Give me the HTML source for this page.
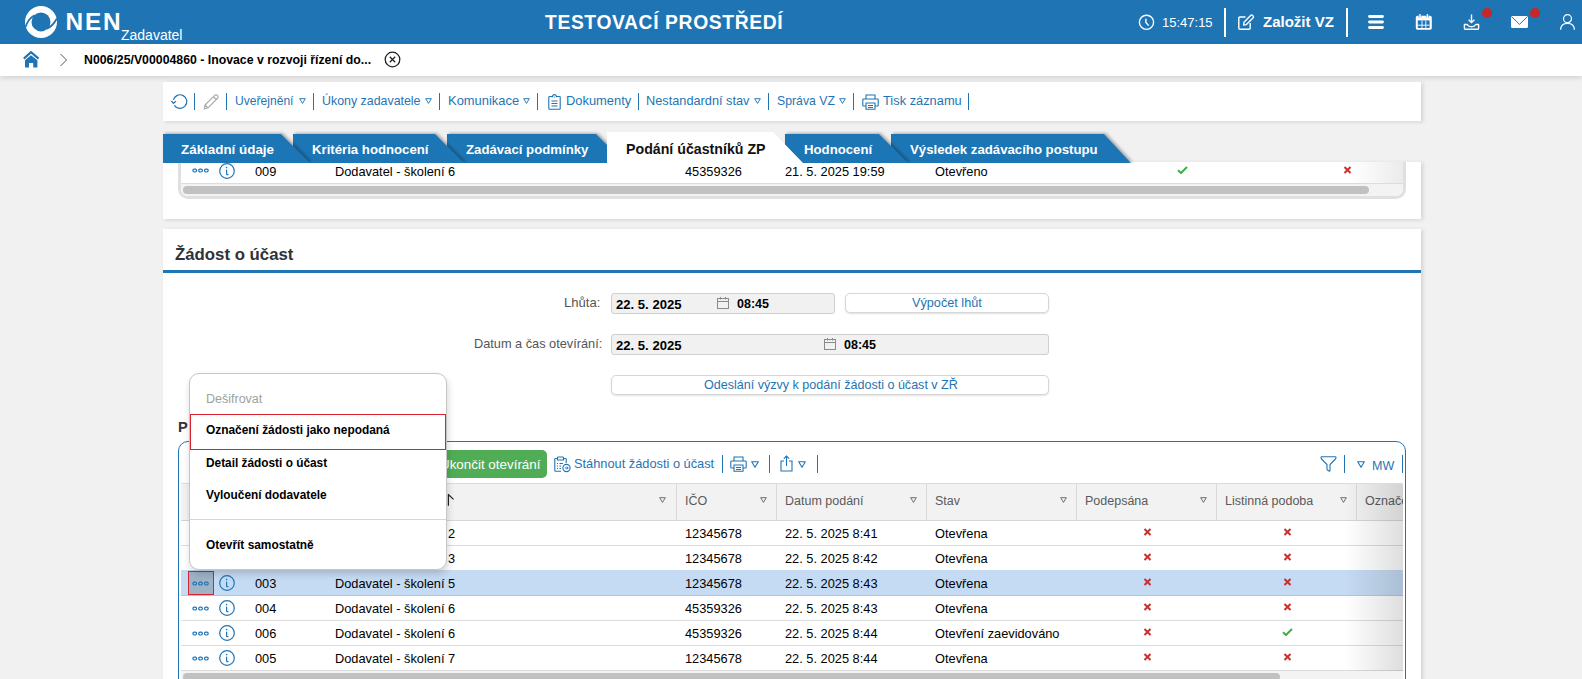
<!DOCTYPE html>
<html><head><meta charset="utf-8">
<style>
*{box-sizing:border-box;margin:0;padding:0}
html,body{width:1582px;height:679px;overflow:hidden;background:#f1f1f1;font-family:"Liberation Sans",sans-serif;color:#000;position:relative}
.abs{position:absolute}
svg{position:absolute;overflow:visible}
#hdr{left:0;top:0;width:1582px;height:44px;background:#1f74b4;color:#fff}
#bc{left:0;top:44px;width:1582px;height:32px;background:#fff;box-shadow:0 2px 5px rgba(0,0,0,.13)}
.t{position:absolute;white-space:nowrap;line-height:1}
.lnk{color:#1f74b4;font-size:12.5px}
.sep{position:absolute;width:1.3px;background:#1f74b4}
.panel{position:absolute;background:#fff;box-shadow:1.5px 1px 4px rgba(0,0,0,.13)}
.tabt{position:absolute;white-space:nowrap;line-height:1;color:#fff;font-weight:bold;font-size:13.2px}
.row{position:absolute;left:0;height:25px;width:1224px;border-bottom:1px solid #dcdcdc}
.c{position:absolute;white-space:nowrap;line-height:1;font-size:12.8px;top:7px}
.hd{position:absolute;white-space:nowrap;line-height:1;font-size:12.5px;color:#5a5a5a;top:12px}
.csep{position:absolute;top:0;width:1px;height:36px;background:#d8d8d8}
.tri{position:absolute}
.inp{position:absolute;background:#f1f1f1;border:1px solid #cfcfcf;border-radius:3px}
.btn{position:absolute;background:#fff;border:1px solid #d6d6d6;border-radius:5px;box-shadow:0 1px 2px rgba(0,0,0,.12)}
.mi{position:absolute;white-space:nowrap;line-height:1;font-size:12.5px;font-weight:bold;left:16px}
</style></head><body>
<svg width="0" height="0" style="position:absolute">
 <defs>
  <symbol id="tri" viewBox="0 0 8 7"><path d="M0.7 0.8 L7.3 0.8 L4 6.3 Z" fill="none" stroke="currentColor" stroke-width="1.1" stroke-linejoin="round"/></symbol>
  <symbol id="dots" viewBox="0 0 17 5"><rect x="0.9" y="1.1" width="3.7" height="2.9" rx="1.4" fill="none" stroke="currentColor" stroke-width="1.2"/><rect x="6.7" y="1.1" width="3.7" height="2.9" rx="1.4" fill="none" stroke="currentColor" stroke-width="1.2"/><rect x="12.5" y="1.1" width="3.7" height="2.9" rx="1.4" fill="none" stroke="currentColor" stroke-width="1.2"/></symbol>
  <symbol id="info" viewBox="0 0 16 16"><circle cx="8" cy="8" r="7.3" fill="none" stroke="currentColor" stroke-width="1.2"/><circle cx="7.6" cy="4.6" r="0.8" fill="currentColor"/><path d="M7.6 7 L7.6 11 Q7.8 12 9 11.6" fill="none" stroke="currentColor" stroke-width="1.2" stroke-linecap="round"/></symbol>
  <symbol id="x" viewBox="0 0 8 8"><path d="M1 1 L7 7 M7 1 L1 7" stroke="#c9302c" stroke-width="2" stroke-linecap="butt"/></symbol>
  <symbol id="ok" viewBox="0 0 11 8"><path d="M1 4.2 L4 7 L10 1" fill="none" stroke="#3cb043" stroke-width="2"/></symbol>
  <symbol id="cal" viewBox="0 0 12 12"><rect x="0.5" y="1.5" width="11" height="10" fill="none" stroke="#8a8a8a" stroke-width="1"/><path d="M0.5 4.5 H11.5 M3.5 0 V2.5 M8.5 0 V2.5" stroke="#8a8a8a" stroke-width="1"/></symbol>
 </defs>
</svg>

<!-- HEADER -->
<div id="hdr" class="abs">
  <svg style="left:25px;top:6px" width="32" height="32" viewBox="0 0 32 32">
    <circle cx="16" cy="16" r="16" fill="#fff"/>
    <circle cx="16" cy="15.9" r="9.5" fill="#1f74b4"/>
    <path d="M9.5 9.2 Q3 13 0.6 21" fill="none" stroke="#1f74b4" stroke-width="1.7"/>
    <path d="M21.5 23 Q28 20 31.8 12.5" fill="none" stroke="#1f74b4" stroke-width="1.7"/>
  </svg>
  <div class="t" style="left:65.5px;top:9.5px;font-size:24.4px;font-weight:bold;letter-spacing:1.8px">NEN</div>
  <div class="t" style="left:121px;top:28px;font-size:14px">Zadavatel</div>
  <div class="t" style="left:545px;top:13px;font-size:19.3px;font-weight:bold;letter-spacing:0.62px">TESTOVACÍ PROSTŘEDÍ</div>
  <svg style="left:1138px;top:14px" width="17" height="17" viewBox="0 0 17 17"><circle cx="8.5" cy="8.3" r="7.1" fill="none" stroke="#fff" stroke-width="1.4"/><path d="M7.9 4.7 V8.4 L10.7 11.6" fill="none" stroke="#fff" stroke-width="1.4"/></svg>
  <div class="t" style="left:1162px;top:16px;font-size:13px">15:47:15</div>
  <div class="abs" style="left:1224px;top:8px;width:2px;height:29px;background:#fff"></div>
  <svg style="left:1238px;top:14px" width="17" height="16" viewBox="0 0 17 16"><path d="M7.5 3 H2 Q0.8 3 0.8 4.2 V14 Q0.8 15.2 2 15.2 H11 Q12.2 15.2 12.2 14 V9" fill="none" stroke="#fff" stroke-width="1.4"/><path d="M5.6 11 L6 8.2 L12.6 1.6 Q13.6 0.6 14.6 1.6 L15 2 Q16 3 15 4 L8.4 10.6 Z" fill="none" stroke="#fff" stroke-width="1.4" stroke-linejoin="round"/></svg>
  <div class="t" style="left:1263px;top:14px;font-size:15px;font-weight:bold">Založit VZ</div>
  <div class="abs" style="left:1346px;top:8px;width:2px;height:29px;background:#fff"></div>
  <svg style="left:1368px;top:14px" width="16" height="16" viewBox="0 0 16 16"><path d="M1.5 2.5 H14.5 M1.5 8 H14.5 M1.5 13.5 H14.5" stroke="#fff" stroke-width="2.8" stroke-linecap="round"/></svg>
  <svg style="left:1415px;top:14px" width="17" height="16" viewBox="0 0 17 16"><rect x="0.8" y="1.8" width="16" height="13.9" rx="1.6" fill="#fff"/><rect x="2.8" y="6.4" width="11.8" height="7.6" fill="#1f74b4"/><path d="M7 6.4 V14 M10.8 6.4 V14 M2.8 11.2 H14.6" stroke="#fff" stroke-width="0.9"/><path d="M5 0 V3.6 M12.4 0 V3.6" stroke="#fff" stroke-width="1.3"/><path d="M3.9 1.8 V3.8 M6.1 1.8 V3.8 M11.3 1.8 V3.8 M13.5 1.8 V3.8" stroke="#1f74b4" stroke-width="0.7" opacity="0.6"/></svg>
  <svg style="left:1463px;top:14px" width="17" height="16" viewBox="0 0 17 16"><path d="M8.5 0.5 V8.5 M5.6 5.8 L8.5 8.6 L11.4 5.8" fill="none" stroke="#fff" stroke-width="1.4"/><path d="M1.4 10.5 V14.3 Q1.4 15.2 2.3 15.2 H14.7 Q15.6 15.2 15.6 14.3 V10.5 H12.8 Q11.5 12.8 8.5 12.8 Q5.5 12.8 4.2 10.5 Z" fill="none" stroke="#fff" stroke-width="1.4" stroke-linejoin="round"/></svg>
  <div class="abs" style="left:1482px;top:8px;width:10px;height:10px;border-radius:50%;background:#c62828"></div>
  <svg style="left:1511px;top:16px" width="17" height="12" viewBox="0 0 17 12"><rect x="0" y="0" width="17" height="12" rx="1.5" fill="#fff"/><path d="M0.8 0.8 L8.5 8.3 L16.2 0.8" fill="none" stroke="#1f74b4" stroke-width="1"/></svg>
  <div class="abs" style="left:1530px;top:8px;width:10px;height:10px;border-radius:50%;background:#c62828"></div>
  <svg style="left:1559px;top:14px" width="17" height="16" viewBox="0 0 17 16"><circle cx="8.5" cy="4.7" r="4" fill="none" stroke="#fff" stroke-width="1.2"/><path d="M1.6 15.8 Q1.8 9.3 8.5 9.3 Q15.2 9.3 15.4 15.8" fill="none" stroke="#fff" stroke-width="1.2"/></svg>
</div>

<!-- BREADCRUMB -->
<div id="bc" class="abs">
  <svg style="left:23px;top:7px" width="17" height="17" viewBox="0 0 17 17"><path d="M0.8 7.6 L8 1.2 L15.6 7.6" fill="none" stroke="#1f74b4" stroke-width="2.1" stroke-linejoin="miter"/><path d="M2 9.2 L8 4.2 L14.4 9.2 V16.6 H10.2 V12 H6 V16.6 H2 Z" fill="#1f74b4"/></svg>
  <svg style="left:59px;top:9px" width="9" height="14" viewBox="0 0 9 14"><path d="M1.5 1 L7.5 7 L1.5 13" fill="none" stroke="#555" stroke-width="1"/></svg>
  <div class="t" style="left:84px;top:10px;font-size:12.3px;font-weight:bold">N006/25/V00004860 - Inovace v rozvoji řízení do...</div>
  <svg style="left:384px;top:7px" width="17" height="17" viewBox="0 0 17 17"><circle cx="8.5" cy="8.5" r="7.3" fill="none" stroke="#222" stroke-width="1.3"/><path d="M5.8 5.8 L11.2 11.2 M11.2 5.8 L5.8 11.2" stroke="#222" stroke-width="1.3"/></svg>
</div>

<!-- TOOLBAR -->
<div class="panel" style="left:163px;top:82px;width:1258px;height:39px">
</div>
<div id="tb">
  <svg style="left:171px;top:94px" width="17" height="16" viewBox="0 0 17 16"><path d="M2.4 5.9 A6.8 6.8 0 1 1 3.3 11.3" fill="none" stroke="#1f74b4" stroke-width="1.2"/><path d="M0.5 6.8 L2.4 9.4 L4.9 7.2" fill="none" stroke="#1f74b4" stroke-width="1.3"/></svg>
  <div class="sep" style="left:194px;top:93px;height:17px"></div>
  <svg style="left:203px;top:94px" width="16" height="16" viewBox="0 0 16 16"><path d="M1.2 15 L2 11 L12 1.2 Q13 0.5 14 1.2 L14.8 2 Q15.5 3 14.8 4 L5 13.8 Z M10.5 2.8 L13.2 5.5 M2 11 L5 14" fill="none" stroke="#a8a8a8" stroke-width="1.1" stroke-linejoin="round"/></svg>
  <div class="sep" style="left:226px;top:93px;height:17px"></div>
  <div class="t lnk" style="left:235px;top:95px;font-size:12.1px">Uveřejnění</div>
  <svg style="left:299px;top:98px;color:#1f74b4" width="7" height="6"><use href="#tri"/></svg>
  <div class="sep" style="left:313px;top:93px;height:17px"></div>
  <div class="t lnk" style="left:322px;top:95px;font-size:12.4px">Úkony zadavatele</div>
  <svg style="left:425px;top:98px;color:#1f74b4" width="7" height="6"><use href="#tri"/></svg>
  <div class="sep" style="left:439px;top:93px;height:17px"></div>
  <div class="t lnk" style="left:448px;top:95px;font-size:12.95px">Komunikace</div>
  <svg style="left:523px;top:98px;color:#1f74b4" width="7" height="6"><use href="#tri"/></svg>
  <div class="sep" style="left:537px;top:93px;height:17px"></div>
  <svg style="left:548px;top:94px" width="13" height="16" viewBox="0 0 13 16"><path d="M4 2.5 H1.5 Q0.8 2.5 0.8 3.2 V14.5 Q0.8 15.2 1.5 15.2 H11.5 Q12.2 15.2 12.2 14.5 V3.2 Q12.2 2.5 11.5 2.5 H9" fill="none" stroke="#1f74b4" stroke-width="1.1"/><path d="M3.5 2.6 H4.6 A1.9 1.9 0 0 1 8.4 2.6 H9.5" fill="none" stroke="#1f74b4" stroke-width="1.2"/><circle cx="6.5" cy="2.9" r="0.5" fill="#1f74b4"/><path d="M3.5 7 H9.5 M3.5 9.5 H9.5 M3.5 12 H9.5" stroke="#1f74b4" stroke-width="1.1"/></svg>
  <div class="t lnk" style="left:566px;top:95px;font-size:12.9px">Dokumenty</div>
  <div class="sep" style="left:638px;top:93px;height:17px"></div>
  <div class="t lnk" style="left:646px;top:95px;font-size:12.75px">Nestandardní stav</div>
  <svg style="left:754px;top:98px;color:#1f74b4" width="7" height="6"><use href="#tri"/></svg>
  <div class="sep" style="left:768px;top:93px;height:17px"></div>
  <div class="t lnk" style="left:777px;top:95px;font-size:12.25px">Správa VZ</div>
  <svg style="left:839px;top:98px;color:#1f74b4" width="7" height="6"><use href="#tri"/></svg>
  <div class="sep" style="left:853px;top:93px;height:17px"></div>
  <svg style="left:862px;top:94px" width="17" height="16" viewBox="0 0 17 16"><path d="M4 5 V1 H13 V5" fill="none" stroke="#1f74b4" stroke-width="1.1"/><path d="M4 12 H1.5 Q0.8 12 0.8 11.2 V5.8 Q0.8 5 1.5 5 H15.5 Q16.2 5 16.2 5.8 V11.2 Q16.2 12 15.5 12 H13" fill="none" stroke="#1f74b4" stroke-width="1.1"/><path d="M4 9 H13 V15.2 H4 Z M6 11.5 H11 M6 13.5 H11" fill="none" stroke="#1f74b4" stroke-width="1.1"/></svg>
  <div class="t lnk" style="left:883px;top:95px;font-size:12.85px">Tisk záznamu</div>
  <div class="sep" style="left:968px;top:93px;height:17px"></div>
</div>

<!-- TABS -->
<div id="tabs" style="position:absolute;left:0;top:0;z-index:5"><svg style="left:0;top:0;overflow:hidden" width="1582" height="163" viewBox="0 0 1582 163"><defs><filter id="tsh" x="-10%" y="-50%" width="120%" height="200%"><feDropShadow dx="1.8" dy="-0.8" stdDeviation="1.4" flood-color="#000" flood-opacity="0.32"/></filter></defs><polygon points="891,163 891,134 1104,134 1130,162 1131,163" fill="#1f74b4" filter="url(#tsh)"/><polygon points="785,163 785,134 879,134 907,162 908,163" fill="#1f74b4" filter="url(#tsh)"/><polygon points="447,163 447,134 596,134 624,162 625,163" fill="#1f74b4" filter="url(#tsh)"/><polygon points="293,163 293,134 435,134 463,162 464,163" fill="#1f74b4" filter="url(#tsh)"/><polygon points="163,163 163,134 281,134 309,162 310,163" fill="#1f74b4" filter="url(#tsh)"/><polygon points="607,163 607,132 773,132 803,163 803,163" fill="#fff"/></svg><div class="tabt" style="left:181px;top:143px;font-size:13.4px">Základní údaje</div><div class="tabt" style="left:312px;top:143px">Kritéria hodnocení</div><div class="tabt" style="left:466px;top:143px">Zadávací podmínky</div><div class="tabt" style="left:804px;top:143px">Hodnocení</div><div class="tabt" style="left:910px;top:143px">Výsledek zadávacího postupu</div><div class="t" style="left:626px;top:142px;font-size:14.2px;font-weight:bold;color:#111">Podání účastníků ZP</div></div>

<!-- TOP TABLE PANEL -->
<div class="panel" style="left:163px;top:162px;width:1258px;height:57px"></div>
<div class="abs" style="left:178px;top:162px;width:1228px;height:37px;border:3px solid #dfe0e2;border-top:none;border-radius:0 0 10px 10px;overflow:hidden;background:#fff">
  <div class="abs" style="left:0;top:0;width:1222px;height:22px;border-bottom:1px solid #dcdcdc"></div>
  <div class="abs" style="left:1170px;top:0;width:52px;height:21px;background:linear-gradient(90deg,rgba(235,235,235,0),#ebebeb)"></div>
  <div class="abs" style="left:0;top:22px;width:1222px;height:12px;background:#f3f3f3"></div>
  <div class="abs" style="left:2px;top:24px;width:1186px;height:8px;border-radius:4px;background:#c1c1c1"></div>
</div>
<svg style="left:192px;top:168px;color:#1f74b4" width="17" height="5"><use href="#dots"/></svg>
<svg style="left:219px;top:163px;color:#1f74b4" width="16" height="16"><use href="#info"/></svg>
<div class="c" style="left:255px;top:166px">009</div>
<div class="c" style="left:335px;top:166px">Dodavatel - školení 6</div>
<div class="c" style="left:685px;top:166px">45359326</div>
<div class="c" style="left:785px;top:166px">21. 5. 2025 19:59</div>
<div class="c" style="left:935px;top:166px">Otevřeno</div>
<svg style="left:1177px;top:166px" width="11" height="8"><use href="#ok"/></svg>
<svg style="left:1343px;top:166px" width="9" height="8"><use href="#x"/></svg>

<!-- SECTION -->
<div class="panel" style="left:163px;top:229px;width:1258px;height:460px"></div>
<div class="t" style="left:175px;top:246.5px;font-size:16.8px;font-weight:bold;color:#2e3338">Žádost o účast</div>
<div class="abs" style="left:163px;top:270px;width:1258px;height:3px;background:#1f74b4"></div>
<!-- FORM -->
<div class="t" style="left:564px;top:296px;font-size:13.1px;color:#555">Lhůta:</div>
<div class="inp" style="left:611px;top:293px;width:224px;height:21px"></div>
<div class="t" style="left:616px;top:298px;font-size:13.1px;font-weight:bold">22. 5. 2025</div>
<svg style="left:717px;top:297px" width="12" height="12"><use href="#cal"/></svg>
<div class="t" style="left:737px;top:298px;font-size:12.5px;font-weight:bold">08:45</div>
<div class="btn" style="left:845px;top:293px;width:204px;height:20px"></div>
<div class="t lnk" style="left:912px;top:297px;font-size:12.7px">Výpočet lhůt</div>
<div class="t" style="left:474px;top:338px;font-size:12.75px;color:#555">Datum a čas otevírání:</div>
<div class="inp" style="left:611px;top:334px;width:438px;height:21px"></div>
<div class="t" style="left:616px;top:339px;font-size:13.1px;font-weight:bold">22. 5. 2025</div>
<svg style="left:824px;top:338px" width="12" height="12"><use href="#cal"/></svg>
<div class="t" style="left:844px;top:339px;font-size:12.5px;font-weight:bold">08:45</div>
<div class="btn" style="left:611px;top:375px;width:438px;height:20px"></div>
<div class="t lnk" style="left:704px;top:379px;font-size:12.55px">Odeslání výzvy k podání žádosti o účast v ZŘ</div>
<div class="t" style="left:178px;top:420px;font-size:14.6px;font-weight:bold;color:#2e3338">P</div>

<!-- GRID -->
<div class="abs" style="left:178px;top:441px;width:1228px;height:260px;border:1.5px solid #1f74b4;border-radius:10px 10px 0 0;background:#fff;overflow:hidden">
 <div class="abs" style="left:1.5px;top:41px;width:1222px;height:38px;background:#f2f2f2;border-top:1px solid #dcdcdc;border-bottom:1px solid #d6d6d6"></div>
 <div class="abs" style="left:497px;top:42px;width:1px;height:36px;background:#d9d9d9"></div>
 <div class="abs" style="left:597px;top:42px;width:1px;height:36px;background:#d9d9d9"></div>
 <div class="abs" style="left:747px;top:42px;width:1px;height:36px;background:#d9d9d9"></div>
 <div class="abs" style="left:897px;top:42px;width:1px;height:36px;background:#d9d9d9"></div>
 <div class="abs" style="left:1037px;top:42px;width:1px;height:36px;background:#d9d9d9"></div>
 <div class="abs" style="left:1177px;top:42px;width:1px;height:36px;background:#d9d9d9"></div>
</div>
<svg style="left:447px;top:493px" width="8" height="13" viewBox="0 0 8 13"><path d="M1.4 12.8 V1.4 M1 1.2 L6.6 6.4" fill="none" stroke="#222" stroke-width="1.2"/></svg>
<svg style="left:659px;top:497px;color:#666" width="7" height="6"><use href="#tri"/></svg>
<div class="hd" style="left:685px;top:495px">IČO</div>
<svg style="left:760px;top:497px;color:#666" width="7" height="6"><use href="#tri"/></svg>
<div class="hd" style="left:785px;top:495px">Datum podání</div>
<svg style="left:910px;top:497px;color:#666" width="7" height="6"><use href="#tri"/></svg>
<div class="hd" style="left:935px;top:495px">Stav</div>
<svg style="left:1060px;top:497px;color:#666" width="7" height="6"><use href="#tri"/></svg>
<div class="hd" style="left:1085px;top:495px">Podepsána</div>
<svg style="left:1200px;top:497px;color:#666" width="7" height="6"><use href="#tri"/></svg>
<div class="hd" style="left:1225px;top:495px">Listinná podoba</div>
<svg style="left:1340px;top:497px;color:#666" width="7" height="6"><use href="#tri"/></svg>
<div class="abs" style="left:1357px;top:484px;width:46px;height:36px;overflow:hidden"><div class="hd" style="left:8px;top:11px">Označení</div></div>
<div class="abs" style="left:181px;top:521px;width:1222px;height:25px;background:#fff;border-bottom:1px solid #dcdcdc"></div>
<svg style="left:192px;top:531px;color:#1f74b4" width="17" height="5"><use href="#dots"/></svg>
<svg style="left:219px;top:525px;color:#1f74b4" width="16" height="16"><use href="#info"/></svg>
<div class="c" style="left:255px;top:528px">001</div>
<div class="c" style="left:335px;top:528px">Dodavatel - školení 2</div>
<div class="c" style="left:685px;top:528px">12345678</div>
<div class="c" style="left:785px;top:528px">22. 5. 2025 8:41</div>
<div class="c" style="left:935px;top:528px">Otevřena</div>
<svg style="left:1143px;top:528px" width="9" height="8"><use href="#x"/></svg>
<svg style="left:1283px;top:528px" width="9" height="8"><use href="#x"/></svg>
<div class="abs" style="left:181px;top:546px;width:1222px;height:25px;background:#fff;border-bottom:1px solid #dcdcdc"></div>
<svg style="left:192px;top:556px;color:#1f74b4" width="17" height="5"><use href="#dots"/></svg>
<svg style="left:219px;top:550px;color:#1f74b4" width="16" height="16"><use href="#info"/></svg>
<div class="c" style="left:255px;top:553px">002</div>
<div class="c" style="left:335px;top:553px">Dodavatel - školení 3</div>
<div class="c" style="left:685px;top:553px">12345678</div>
<div class="c" style="left:785px;top:553px">22. 5. 2025 8:42</div>
<div class="c" style="left:935px;top:553px">Otevřena</div>
<svg style="left:1143px;top:553px" width="9" height="8"><use href="#x"/></svg>
<svg style="left:1283px;top:553px" width="9" height="8"><use href="#x"/></svg>
<div class="abs" style="left:181px;top:570px;width:1222px;height:26px;background:#c5dbf3;border-bottom:1px solid #a9c9ec"></div>
<div class="abs" style="left:188px;top:571px;width:26px;height:24px;border:1.5px solid #d9232e;background:#9fb2c6"></div>
<svg style="left:192px;top:581px;color:#1f74b4" width="17" height="5"><use href="#dots"/></svg>
<svg style="left:219px;top:575px;color:#1f74b4" width="16" height="16"><use href="#info"/></svg>
<div class="c" style="left:255px;top:578px">003</div>
<div class="c" style="left:335px;top:578px">Dodavatel - školení 5</div>
<div class="c" style="left:685px;top:578px">12345678</div>
<div class="c" style="left:785px;top:578px">22. 5. 2025 8:43</div>
<div class="c" style="left:935px;top:578px">Otevřena</div>
<svg style="left:1143px;top:578px" width="9" height="8"><use href="#x"/></svg>
<svg style="left:1283px;top:578px" width="9" height="8"><use href="#x"/></svg>
<div class="abs" style="left:181px;top:596px;width:1222px;height:25px;background:#fff;border-bottom:1px solid #dcdcdc"></div>
<svg style="left:192px;top:606px;color:#1f74b4" width="17" height="5"><use href="#dots"/></svg>
<svg style="left:219px;top:600px;color:#1f74b4" width="16" height="16"><use href="#info"/></svg>
<div class="c" style="left:255px;top:603px">004</div>
<div class="c" style="left:335px;top:603px">Dodavatel - školení 6</div>
<div class="c" style="left:685px;top:603px">45359326</div>
<div class="c" style="left:785px;top:603px">22. 5. 2025 8:43</div>
<div class="c" style="left:935px;top:603px">Otevřena</div>
<svg style="left:1143px;top:603px" width="9" height="8"><use href="#x"/></svg>
<svg style="left:1283px;top:603px" width="9" height="8"><use href="#x"/></svg>
<div class="abs" style="left:181px;top:621px;width:1222px;height:25px;background:#fff;border-bottom:1px solid #dcdcdc"></div>
<svg style="left:192px;top:631px;color:#1f74b4" width="17" height="5"><use href="#dots"/></svg>
<svg style="left:219px;top:625px;color:#1f74b4" width="16" height="16"><use href="#info"/></svg>
<div class="c" style="left:255px;top:628px">006</div>
<div class="c" style="left:335px;top:628px">Dodavatel - školení 6</div>
<div class="c" style="left:685px;top:628px">45359326</div>
<div class="c" style="left:785px;top:628px">22. 5. 2025 8:44</div>
<div class="c" style="left:935px;top:628px">Otevření zaevidováno</div>
<svg style="left:1143px;top:628px" width="9" height="8"><use href="#x"/></svg>
<svg style="left:1282px;top:628px" width="11" height="8"><use href="#ok"/></svg>
<div class="abs" style="left:181px;top:646px;width:1222px;height:25px;background:#fff;border-bottom:1px solid #dcdcdc"></div>
<svg style="left:192px;top:656px;color:#1f74b4" width="17" height="5"><use href="#dots"/></svg>
<svg style="left:219px;top:650px;color:#1f74b4" width="16" height="16"><use href="#info"/></svg>
<div class="c" style="left:255px;top:653px">005</div>
<div class="c" style="left:335px;top:653px">Dodavatel - školení 7</div>
<div class="c" style="left:685px;top:653px">12345678</div>
<div class="c" style="left:785px;top:653px">22. 5. 2025 8:44</div>
<div class="c" style="left:935px;top:653px">Otevřena</div>
<svg style="left:1143px;top:653px" width="9" height="8"><use href="#x"/></svg>
<svg style="left:1283px;top:653px" width="9" height="8"><use href="#x"/></svg>
<div class="abs" style="left:1345px;top:484px;width:58px;height:187px;background:linear-gradient(90deg,rgba(0,0,0,0),rgba(0,0,0,.13))"></div>
<div class="abs" style="left:181px;top:671px;width:1222px;height:8px;background:#f3f3f3"></div>
<div class="abs" style="left:183px;top:673px;width:1097px;height:8px;border-radius:4px;background:#c1c1c1"></div>
<div class="abs" style="left:420px;top:450px;width:127px;height:28px;border-radius:5px;background:#50ad55"></div>
<div class="t" style="left:440px;top:458px;font-size:13.4px;color:#fff">Ukončit otevírání</div>
<svg style="left:554px;top:456px" width="17" height="16" viewBox="0 0 17 16"><path d="M3.5 2.5 H1.5 Q0.8 2.5 0.8 3.2 V14.5 Q0.8 15.2 1.5 15.2 H7" fill="none" stroke="#1f74b4" stroke-width="1.1"/><path d="M9.5 2.5 H11.5 Q12.2 2.5 12.2 3.2 V7" fill="none" stroke="#1f74b4" stroke-width="1.1"/><path d="M3.5 4 V1.8 Q3.5 1 4.3 1 H8.7 Q9.5 1 9.5 1.8 V4 Z" fill="none" stroke="#1f74b4" stroke-width="1.1"/><path d="M3 7.5 H4 M5.5 7.5 H9 M3 10 H4 M5.5 10 H7 M3 12.5 H4 M5.5 12.5 H7" stroke="#1f74b4" stroke-width="1.1"/><circle cx="12.5" cy="12" r="3.6" fill="#fff" stroke="#1f74b4" stroke-width="1.1"/><path d="M10.8 12 H14.2 M12.8 10.6 L14.2 12 L12.8 13.4" fill="none" stroke="#1f74b4" stroke-width="1"/></svg>
<div class="t lnk" style="left:574px;top:458px;font-size:12.8px">Stáhnout žádosti o účast</div>
<div class="sep" style="left:722px;top:455px;height:18px"></div>
<svg style="left:730px;top:456px" width="17" height="16" viewBox="0 0 17 16"><path d="M4 5 V1 H13 V5" fill="none" stroke="#1f74b4" stroke-width="1.1"/><path d="M4 12 H1.5 Q0.8 12 0.8 11.2 V5.8 Q0.8 5 1.5 5 H15.5 Q16.2 5 16.2 5.8 V11.2 Q16.2 12 15.5 12 H13" fill="none" stroke="#1f74b4" stroke-width="1.1"/><path d="M4 9 H13 V15.2 H4 Z M6 11.5 H11 M6 13.5 H11" fill="none" stroke="#1f74b4" stroke-width="1.1"/></svg>
<svg style="left:751px;top:461px;color:#1f74b4" width="8" height="7"><use href="#tri"/></svg>
<div class="sep" style="left:769px;top:455px;height:18px"></div>
<svg style="left:780px;top:455px" width="13" height="17" viewBox="0 0 13 17"><path d="M4 6 H1 V16 H12 V6 H9" fill="none" stroke="#1f74b4" stroke-width="1.1"/><path d="M6.5 11 V1 M3.8 3.7 L6.5 1 L9.2 3.7" fill="none" stroke="#1f74b4" stroke-width="1.1"/></svg>
<svg style="left:798px;top:461px;color:#1f74b4" width="8" height="7"><use href="#tri"/></svg>
<div class="sep" style="left:817px;top:455px;height:18px"></div>
<svg style="left:1320px;top:456px" width="17" height="16" viewBox="0 0 17 16"><path d="M1 1.5 Q1 0.8 1.8 0.8 H15.2 Q16 0.8 16 1.5 Q16 2.5 15 3.5 L10 8.5 V14.5 Q10 15.5 9 15 L7.5 14 Q7 13.6 7 13 V8.5 L2 3.5 Q1 2.5 1 1.5 Z" fill="none" stroke="#1f74b4" stroke-width="1.1"/></svg>
<div class="sep" style="left:1344px;top:455px;height:18px"></div>
<svg style="left:1357px;top:461px;color:#1f74b4" width="8" height="7"><use href="#tri"/></svg>
<div class="t lnk" style="left:1372px;top:460px;font-size:12.5px">MW</div>
<div class="sep" style="left:1402px;top:455px;height:18px"></div>
<!-- POPUP -->
<div class="abs" style="left:189px;top:373px;width:258px;height:197px;background:#fff;border:1px solid #c6c6c6;border-radius:10px;box-shadow:1px 4px 7px rgba(0,0,0,.17);z-index:10">
 <div class="t" style="left:16px;top:19px;font-size:12.5px;color:#a0a0a0">Dešifrovat</div>
 <div class="abs" style="left:0;top:40px;width:256px;height:36px;border:1.5px solid #d9232e"></div>
 <div class="mi" style="top:51px;font-size:11.9px">Označení žádosti jako nepodaná</div>
 <div class="mi" style="top:84px;font-size:11.85px">Detail žádosti o účast</div>
 <div class="mi" style="top:116px;font-size:11.85px">Vyloučení dodavatele</div>
 <div class="abs" style="left:0;top:145px;width:256px;height:1px;background:#d6d6d6"></div>
 <div class="mi" style="top:166px;font-size:11.9px">Otevřít samostatně</div>
</div>
</body></html>
